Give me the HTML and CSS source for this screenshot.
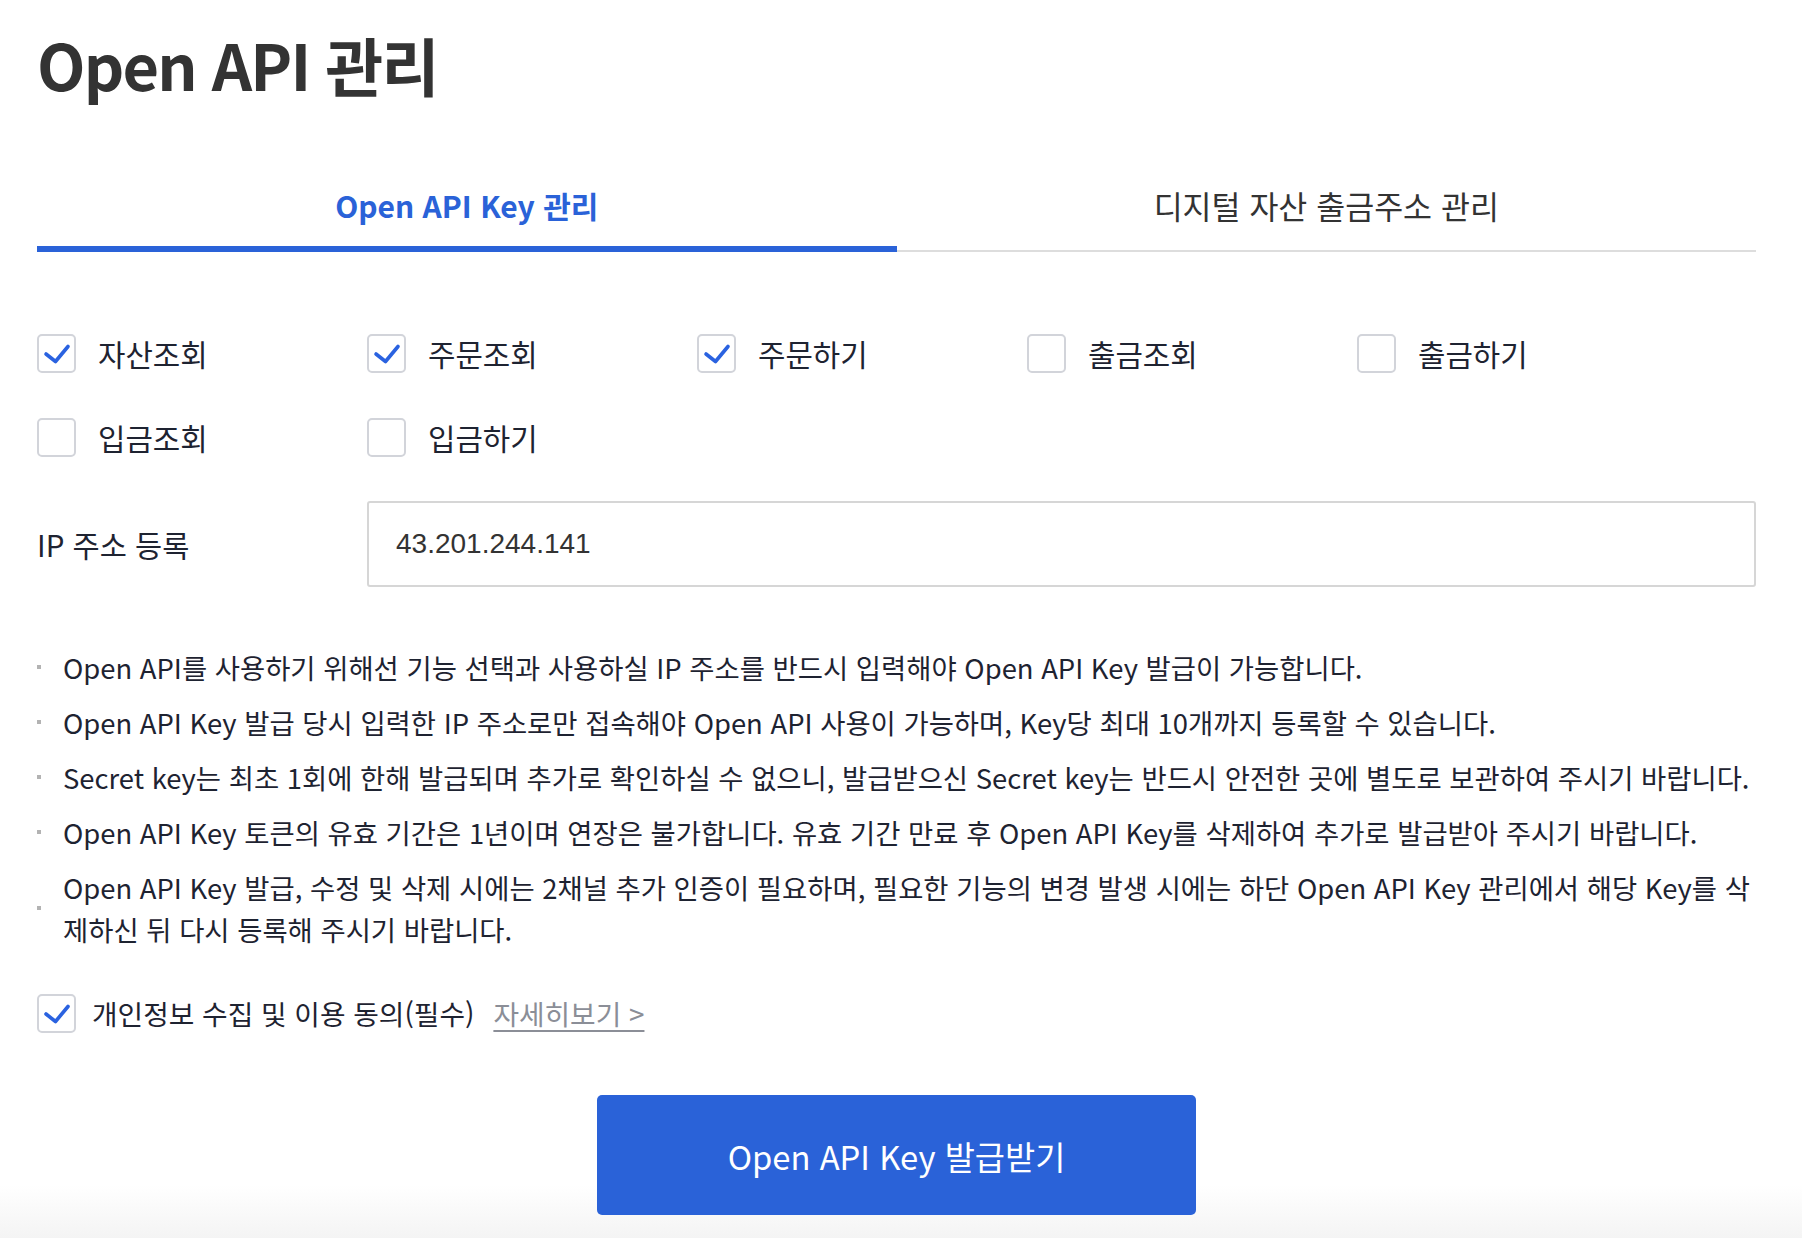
FILE: index.html
```html
<!DOCTYPE html>
<html lang="ko">
<head>
<meta charset="utf-8">
<title>Open API 관리</title>
<link rel="stylesheet" href="styles.css">
</head>
<body>
<main class="page">
  <h1 class="title">Open API 관리</h1>

  <nav class="tabs">
    <div class="tab active">Open API Key 관리</div>
    <div class="tab">디지털 자산 출금주소 관리</div>
  </nav>

  <div class="perms">
    <label class="perm"><svg class="cb" viewBox="0 0 39 39"><rect x="1" y="1" width="37" height="37" rx="4"/><path d="M9 20 L18.5 27.5 L31 12.5"/></svg><span>자산조회</span></label>
    <label class="perm"><svg class="cb" viewBox="0 0 39 39"><rect x="1" y="1" width="37" height="37" rx="4"/><path d="M9 20 L18.5 27.5 L31 12.5"/></svg><span>주문조회</span></label>
    <label class="perm"><svg class="cb" viewBox="0 0 39 39"><rect x="1" y="1" width="37" height="37" rx="4"/><path d="M9 20 L18.5 27.5 L31 12.5"/></svg><span>주문하기</span></label>
    <label class="perm"><svg class="cb" viewBox="0 0 39 39"><rect x="1" y="1" width="37" height="37" rx="4"/></svg><span>출금조회</span></label>
    <label class="perm"><svg class="cb" viewBox="0 0 39 39"><rect x="1" y="1" width="37" height="37" rx="4"/></svg><span>출금하기</span></label>
    <label class="perm"><svg class="cb" viewBox="0 0 39 39"><rect x="1" y="1" width="37" height="37" rx="4"/></svg><span>입금조회</span></label>
    <label class="perm"><svg class="cb" viewBox="0 0 39 39"><rect x="1" y="1" width="37" height="37" rx="4"/></svg><span>입금하기</span></label>
  </div>

  <div class="ip-row">
    <div class="ip-label">IP 주소 등록</div>
    <div class="ip-input">43.201.244.141</div>
  </div>

  <ul class="notes">
    <li><span>Open API를 사용하기 위해선 기능 선택과 사용하실 IP 주소를 반드시 입력해야 Open API Key 발급이 가능합니다.</span></li>
    <li><span>Open API Key 발급 당시 입력한 IP 주소로만 접속해야 Open API 사용이 가능하며, Key당 최대 10개까지 등록할 수 있습니다.</span></li>
    <li><span>Secret key는 최초 1회에 한해 발급되며 추가로 확인하실 수 없으니, 발급받으신 Secret key는 반드시 안전한 곳에 별도로 보관하여 주시기 바랍니다.</span></li>
    <li><span>Open API Key 토큰의 유효 기간은 1년이며 연장은 불가합니다. 유효 기간 만료 후 Open API Key를 삭제하여 추가로 발급받아 주시기 바랍니다.</span></li>
    <li><span>Open API Key 발급, 수정 및 삭제 시에는 2채널 추가 인증이 필요하며, 필요한 기능의 변경 발생 시에는 하단 Open API Key 관리에서 해당 Key를 삭<br>제하신 뒤 다시 등록해 주시기 바랍니다.</span></li>
  </ul>

  <div class="agree">
    <svg class="cb" viewBox="0 0 39 39"><rect x="1" y="1" width="37" height="37" rx="4"/><path d="M9 20 L18.5 27.5 L31 12.5"/></svg>
    <span class="agree-text">개인정보 수집 및 이용 동의(필수)</span>
    <a class="more" href="#">자세히보기 &gt;</a>
  </div>

  <div class="actions">
    <button class="issue" type="button">Open API Key 발급받기</button>
  </div>
</main>
</body>
</html>
```

FILE: styles.css
```css
html, body {
  margin: 0;
  padding: 0;
}

body {
  min-height: 1238px;
  background: linear-gradient(to bottom, #ffffff 0, #ffffff 1185px, #f4f4f4 1238px);
  font-family: "Noto Sans CJK KR", "Noto Sans", sans-serif;
  color: #1e2331;
}

.page {
  margin: 0 46px 0 37px;
}

.title {
  margin: 24px 0 0 0;
  font-size: 63px;
  line-height: 80px;
  font-weight: 700;
  color: #333333;
  letter-spacing: -1.8px;
}

.tabs {
  display: flex;
  margin-top: 81px;
  border-bottom: 2px solid #dddddd;
}

.tab {
  flex: 1;
  text-align: center;
  font-size: 31.5px;
  line-height: 40px;
  padding-bottom: 21px;
  margin-bottom: -2px;
  border-bottom: 6px solid transparent;
  color: #333333;
}

.tab.active {
  font-size: 30px;
  color: #2a62d8;
  font-weight: 700;
  border-bottom-color: #2a62d8;
}

.perms {
  display: flex;
  flex-wrap: wrap;
  row-gap: 45px;
  margin-top: 82px;
}

.perm {
  width: 330px;
  display: flex;
  align-items: center;
  gap: 22px;
  font-size: 29.8px;
  line-height: 39px;
  color: #1e2331;
}

.cb {
  width: 39px;
  height: 39px;
  flex: none;
  display: block;
}

.cb rect {
  fill: #ffffff;
  stroke: #d2d4da;
  stroke-width: 2;
}

.cb path {
  fill: none;
  stroke: #2a62e0;
  stroke-width: 3.6;
  stroke-linecap: round;
  stroke-linejoin: round;
}

.ip-row {
  display: flex;
  align-items: center;
  margin-top: 44px;
}

.ip-label {
  width: 330px;
  font-size: 29.5px;
  color: #1e2331;
}

.ip-input {
  flex: 1;
  height: 86px;
  box-sizing: border-box;
  border: 2px solid #d6d6d6;
  border-radius: 3px;
  padding: 0 27px;
  display: flex;
  align-items: center;
  font-family: "Liberation Sans", Arial, sans-serif;
  font-size: 28px;
  color: #333333;
}

.notes {
  list-style: none;
  margin: 59px 0 0 0;
  padding: 0;
  display: flex;
  flex-direction: column;
  gap: 13px;
}

.notes li {
  display: flex;
  align-items: center;
  font-size: 27.4px;
  line-height: 42px;
  white-space: nowrap;
  color: #1e2331;
}

.notes li::before {
  content: "";
  flex: none;
  width: 4px;
  height: 4px;
  background: #b3b3b3;
  margin-right: 22px;
}

.agree {
  display: flex;
  align-items: center;
  margin-top: 44px;
  font-size: 27.8px;
  line-height: 39px;
}

.agree-text {
  margin-left: 16px;
  color: #1e2331;
}

.more {
  margin-left: 19px;
  color: #8b8e97;
  text-decoration: underline;
  text-underline-offset: 5px;
  text-decoration-thickness: 2px;
}

.actions {
  display: flex;
  justify-content: center;
  margin-top: 62px;
}

.issue {
  width: 599px;
  height: 120px;
  border: 0;
  border-radius: 5px;
  background: #2a62d8;
  color: #ffffff;
  font-family: "Noto Sans CJK KR", "Noto Sans", sans-serif;
  font-size: 32.8px;
  font-weight: 400;
  cursor: pointer;
}
```
